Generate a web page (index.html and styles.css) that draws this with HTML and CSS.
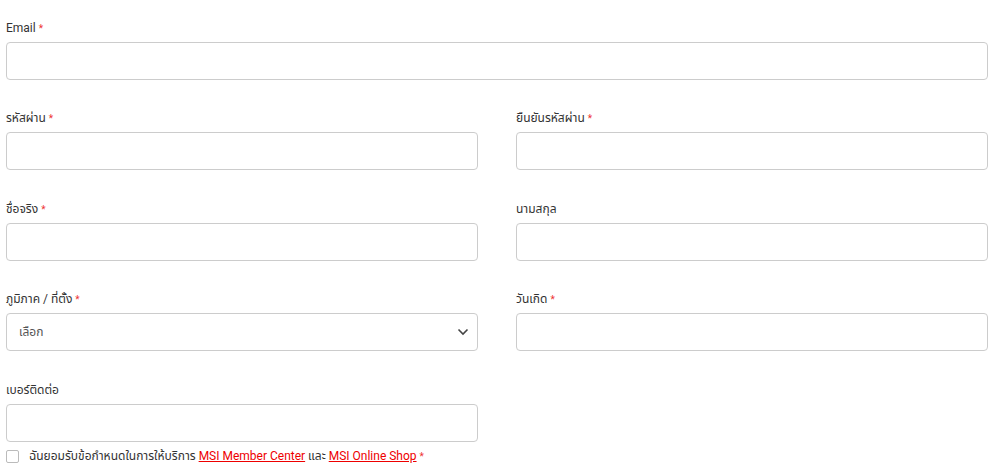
FILE: index.html
```html
<!DOCTYPE html>
<html>
	<head>
		<meta charset="UTF-8">
		<title>สมัครสมาชิก</title>
		<link rel="stylesheet" href="styles.css">
	</head>
	<body>
		<form class="form">
			<div class="field full">
				<label>Email <span class="req">*</span></label>
				<input type="text" class="input">
			</div>
			<div class="field">
				<label>รหัสผ่าน <span class="req">*</span></label>
				<input type="password" class="input">
			</div>
			<div class="field">
				<label>ยืนยันรหัสผ่าน <span class="req">*</span></label>
				<input type="password" class="input">
			</div>
			<div class="field">
				<label>ชื่อจริง <span class="req">*</span></label>
				<input type="text" class="input">
			</div>
			<div class="field">
				<label>นามสกุล</label>
				<input type="text" class="input">
			</div>
			<div class="field">
				<label>ภูมิภาค / ที่ตั้ง <span class="req">*</span></label>
				<div class="select">
					<span>เลือก</span>
					<svg width="12" height="8" viewBox="0 0 12 8"><path d="M1.5 1.5 L6 6 L10.5 1.5" fill="none" stroke="#444" stroke-width="1.6"/></svg>
				</div>
			</div>
			<div class="field">
				<label>วันเกิด <span class="req">*</span></label>
				<input type="text" class="input">
			</div>
			<div class="field">
				<label>เบอร์ติดต่อ</label>
				<input type="text" class="input">
			</div>
		</form>
		<div class="agree">
			<span class="check"></span>
			<span>ฉันยอมรับข้อกำหนดในการให้บริการ <a href="#">MSI Member Center</a> และ <a href="#">MSI Online Shop</a> <span class="req">*</span></span>
		</div>
	</body>
</html>
```
FILE: styles.css
```css
*{
	margin: 0;
	padding: 0;
	box-sizing: border-box;
}
body{
	background-color: #fff;
	font-family: Roboto, "Noto Sans", "Noto Sans Thai", Tahoma, sans-serif;
	font-size: 12px;
	color: #333;
	overflow: hidden;
}
.form{
	display: grid;
	grid-template-columns: 472px 472px;
	column-gap: 38px;
	row-gap: 29.4px;
	padding: 19px 0 0 6px;
	width: 988px;
}
.full{
	grid-column: 1 / 3;
}
.field label{
	display: block;
	height: 18px;
	line-height: 18px;
	margin-bottom: 5px;
}
.req{
	color: #e33;
	font-size: 10px;
}
.input, .select{
	display: block;
	width: 100%;
	height: 38px;
	border: 1px solid #ccc;
	border-radius: 4px;
	background: #fff;
}
.select{
	display: flex;
	align-items: center;
	justify-content: space-between;
	padding: 0 8px 0 12px;
	color: #555;
}
.agree{
	display: flex;
	align-items: center;
	gap: 10px;
	padding: 7px 0 0 6px;
	height: 22px;
}
.check{
	width: 13px;
	height: 13px;
	border: 1px solid #bbb;
	border-radius: 2px;
}
.agree a{
	color: #e00;
}
```
